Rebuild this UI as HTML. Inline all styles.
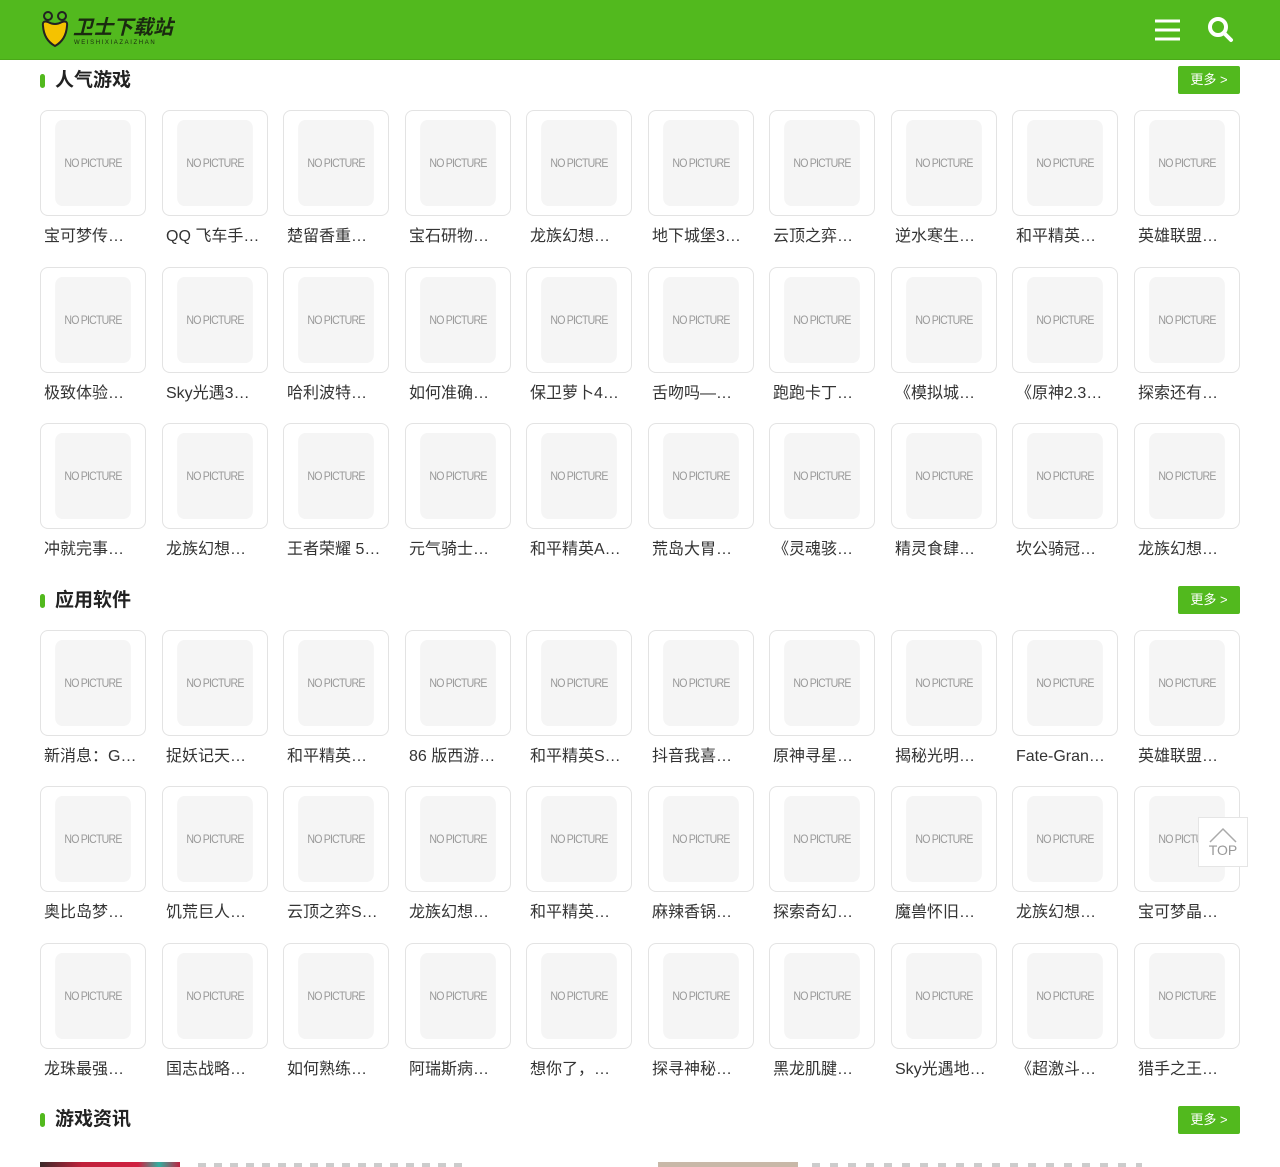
<!DOCTYPE html>
<html><head><meta charset="utf-8"><style>
*{margin:0;padding:0;box-sizing:border-box}
body{width:1280px;height:1167px;overflow:hidden;background:#fff;font-family:"Liberation Sans","Noto Sans CJK SC",sans-serif;position:relative}
.hd{position:absolute;left:0;top:0;width:1280px;height:60px;background:#52b91e;border-bottom:1px solid #4aa818}
.logo{position:absolute;left:40px;top:10px}
.ttl{position:absolute;left:40px;font-size:19px;font-weight:bold;color:#222;height:24px;line-height:24px;padding-left:15px}
.ttl:before{content:"";position:absolute;left:0;top:5px;width:5px;height:14px;border-radius:3px;background:#52b91e}
.more{position:absolute;left:1178px;width:62px;height:28px;background:#52b91e;color:#fff;font-size:13px;line-height:28px;text-align:center;border-radius:2px}
.row{position:absolute;left:40px;width:1210px;height:150px}
.c{position:absolute;top:0;width:106px}
.b{width:106px;height:106px;border:1px solid #e3e3e3;border-radius:8px;padding:9px}
.i{width:86px;height:86px;background:#f5f5f5;border-radius:8px;color:#999;font-size:12px;line-height:86px;text-align:center;letter-spacing:-0.9px;transform:scaleX(0.88)}
.t{font-size:16px;color:#333;margin-top:11px;padding-left:4px;white-space:nowrap;height:20px;line-height:20px}
.top{position:absolute;left:1198px;top:817px;width:50px;height:50px;background:#fff;border:1px solid #e5e5e5;text-align:center;color:#999;font-size:14px}
</style></head><body>
<div class="hd">
<div class="logo"><svg width="135" height="40" viewBox="0 0 135 40">
<circle cx="8" cy="6" r="4" fill="none" stroke="#222" stroke-width="2"/><circle cx="22" cy="6" r="4" fill="none" stroke="#222" stroke-width="2"/>
<path d="M3 16 Q2 10 8 12 Q15 16 22 12 Q28 10 27 16 Q26 30 15 36 Q4 30 3 16Z" fill="#f5c200" stroke="#222" stroke-width="2"/>
<text x="33" y="24" font-size="20" font-weight="bold" fill="#1a2a10" font-family="Noto Sans CJK SC,sans-serif" font-style="italic">卫士下载站</text>
<text x="34" y="34" font-size="6" fill="#1a2a10" letter-spacing="1.6">WEISHIXIAZAIZHAN</text>
</svg></div>
<svg style="position:absolute;left:1154px;top:18px" width="27" height="24"><path d="M1 3h25M1 12h25M1 21h25" stroke="#fff" stroke-width="3"/></svg>
<svg style="position:absolute;left:1207px;top:16px" width="27" height="27"><circle cx="11" cy="11" r="8" fill="none" stroke="#fff" stroke-width="4"/><path d="M17 17l7 7" stroke="#fff" stroke-width="4" stroke-linecap="round"/></svg>
</div>

<div class="ttl" style="top:69px">人气游戏</div><div class="more" style="top:66px">更多 &gt;</div>
<div class="row" style="top:110px">
<div class="c" style="left:0"><div class="b"><div class="i">NO PICTURE</div></div><div class="t">宝可梦传…</div></div>
<div class="c" style="left:122px"><div class="b"><div class="i">NO PICTURE</div></div><div class="t">QQ 飞车手…</div></div>
<div class="c" style="left:243px"><div class="b"><div class="i">NO PICTURE</div></div><div class="t">楚留香重…</div></div>
<div class="c" style="left:365px"><div class="b"><div class="i">NO PICTURE</div></div><div class="t">宝石研物…</div></div>
<div class="c" style="left:486px"><div class="b"><div class="i">NO PICTURE</div></div><div class="t">龙族幻想…</div></div>
<div class="c" style="left:608px"><div class="b"><div class="i">NO PICTURE</div></div><div class="t">地下城堡3…</div></div>
<div class="c" style="left:729px"><div class="b"><div class="i">NO PICTURE</div></div><div class="t">云顶之弈…</div></div>
<div class="c" style="left:851px"><div class="b"><div class="i">NO PICTURE</div></div><div class="t">逆水寒生…</div></div>
<div class="c" style="left:972px"><div class="b"><div class="i">NO PICTURE</div></div><div class="t">和平精英…</div></div>
<div class="c" style="left:1094px"><div class="b"><div class="i">NO PICTURE</div></div><div class="t">英雄联盟…</div></div>
</div>
<div class="row" style="top:267px">
<div class="c" style="left:0"><div class="b"><div class="i">NO PICTURE</div></div><div class="t">极致体验…</div></div>
<div class="c" style="left:122px"><div class="b"><div class="i">NO PICTURE</div></div><div class="t">Sky光遇3…</div></div>
<div class="c" style="left:243px"><div class="b"><div class="i">NO PICTURE</div></div><div class="t">哈利波特…</div></div>
<div class="c" style="left:365px"><div class="b"><div class="i">NO PICTURE</div></div><div class="t">如何准确…</div></div>
<div class="c" style="left:486px"><div class="b"><div class="i">NO PICTURE</div></div><div class="t">保卫萝卜4…</div></div>
<div class="c" style="left:608px"><div class="b"><div class="i">NO PICTURE</div></div><div class="t">舌吻吗—…</div></div>
<div class="c" style="left:729px"><div class="b"><div class="i">NO PICTURE</div></div><div class="t">跑跑卡丁…</div></div>
<div class="c" style="left:851px"><div class="b"><div class="i">NO PICTURE</div></div><div class="t">《模拟城…</div></div>
<div class="c" style="left:972px"><div class="b"><div class="i">NO PICTURE</div></div><div class="t">《原神2.3…</div></div>
<div class="c" style="left:1094px"><div class="b"><div class="i">NO PICTURE</div></div><div class="t">探索还有…</div></div>
</div>
<div class="row" style="top:423px">
<div class="c" style="left:0"><div class="b"><div class="i">NO PICTURE</div></div><div class="t">冲就完事…</div></div>
<div class="c" style="left:122px"><div class="b"><div class="i">NO PICTURE</div></div><div class="t">龙族幻想…</div></div>
<div class="c" style="left:243px"><div class="b"><div class="i">NO PICTURE</div></div><div class="t">王者荣耀 5…</div></div>
<div class="c" style="left:365px"><div class="b"><div class="i">NO PICTURE</div></div><div class="t">元气骑士…</div></div>
<div class="c" style="left:486px"><div class="b"><div class="i">NO PICTURE</div></div><div class="t">和平精英A…</div></div>
<div class="c" style="left:608px"><div class="b"><div class="i">NO PICTURE</div></div><div class="t">荒岛大胃…</div></div>
<div class="c" style="left:729px"><div class="b"><div class="i">NO PICTURE</div></div><div class="t">《灵魂骇…</div></div>
<div class="c" style="left:851px"><div class="b"><div class="i">NO PICTURE</div></div><div class="t">精灵食肆…</div></div>
<div class="c" style="left:972px"><div class="b"><div class="i">NO PICTURE</div></div><div class="t">坎公骑冠…</div></div>
<div class="c" style="left:1094px"><div class="b"><div class="i">NO PICTURE</div></div><div class="t">龙族幻想…</div></div>
</div>

<div class="ttl" style="top:589px">应用软件</div><div class="more" style="top:586px">更多 &gt;</div>
<div class="row" style="top:630px">
<div class="c" style="left:0"><div class="b"><div class="i">NO PICTURE</div></div><div class="t">新消息：G…</div></div>
<div class="c" style="left:122px"><div class="b"><div class="i">NO PICTURE</div></div><div class="t">捉妖记天…</div></div>
<div class="c" style="left:243px"><div class="b"><div class="i">NO PICTURE</div></div><div class="t">和平精英…</div></div>
<div class="c" style="left:365px"><div class="b"><div class="i">NO PICTURE</div></div><div class="t">86 版西游…</div></div>
<div class="c" style="left:486px"><div class="b"><div class="i">NO PICTURE</div></div><div class="t">和平精英S…</div></div>
<div class="c" style="left:608px"><div class="b"><div class="i">NO PICTURE</div></div><div class="t">抖音我喜…</div></div>
<div class="c" style="left:729px"><div class="b"><div class="i">NO PICTURE</div></div><div class="t">原神寻星…</div></div>
<div class="c" style="left:851px"><div class="b"><div class="i">NO PICTURE</div></div><div class="t">揭秘光明…</div></div>
<div class="c" style="left:972px"><div class="b"><div class="i">NO PICTURE</div></div><div class="t">Fate-Gran…</div></div>
<div class="c" style="left:1094px"><div class="b"><div class="i">NO PICTURE</div></div><div class="t">英雄联盟…</div></div>
</div>
<div class="row" style="top:786px">
<div class="c" style="left:0"><div class="b"><div class="i">NO PICTURE</div></div><div class="t">奥比岛梦…</div></div>
<div class="c" style="left:122px"><div class="b"><div class="i">NO PICTURE</div></div><div class="t">饥荒巨人…</div></div>
<div class="c" style="left:243px"><div class="b"><div class="i">NO PICTURE</div></div><div class="t">云顶之弈S…</div></div>
<div class="c" style="left:365px"><div class="b"><div class="i">NO PICTURE</div></div><div class="t">龙族幻想…</div></div>
<div class="c" style="left:486px"><div class="b"><div class="i">NO PICTURE</div></div><div class="t">和平精英…</div></div>
<div class="c" style="left:608px"><div class="b"><div class="i">NO PICTURE</div></div><div class="t">麻辣香锅…</div></div>
<div class="c" style="left:729px"><div class="b"><div class="i">NO PICTURE</div></div><div class="t">探索奇幻…</div></div>
<div class="c" style="left:851px"><div class="b"><div class="i">NO PICTURE</div></div><div class="t">魔兽怀旧…</div></div>
<div class="c" style="left:972px"><div class="b"><div class="i">NO PICTURE</div></div><div class="t">龙族幻想…</div></div>
<div class="c" style="left:1094px"><div class="b"><div class="i">NO PICTURE</div></div><div class="t">宝可梦晶…</div></div>
</div>
<div class="row" style="top:943px">
<div class="c" style="left:0"><div class="b"><div class="i">NO PICTURE</div></div><div class="t">龙珠最强…</div></div>
<div class="c" style="left:122px"><div class="b"><div class="i">NO PICTURE</div></div><div class="t">国志战略…</div></div>
<div class="c" style="left:243px"><div class="b"><div class="i">NO PICTURE</div></div><div class="t">如何熟练…</div></div>
<div class="c" style="left:365px"><div class="b"><div class="i">NO PICTURE</div></div><div class="t">阿瑞斯病…</div></div>
<div class="c" style="left:486px"><div class="b"><div class="i">NO PICTURE</div></div><div class="t">想你了，…</div></div>
<div class="c" style="left:608px"><div class="b"><div class="i">NO PICTURE</div></div><div class="t">探寻神秘…</div></div>
<div class="c" style="left:729px"><div class="b"><div class="i">NO PICTURE</div></div><div class="t">黑龙肌腱…</div></div>
<div class="c" style="left:851px"><div class="b"><div class="i">NO PICTURE</div></div><div class="t">Sky光遇地…</div></div>
<div class="c" style="left:972px"><div class="b"><div class="i">NO PICTURE</div></div><div class="t">《超激斗…</div></div>
<div class="c" style="left:1094px"><div class="b"><div class="i">NO PICTURE</div></div><div class="t">猎手之王…</div></div>
</div>

<div class="ttl" style="top:1108px">游戏资讯</div><div class="more" style="top:1106px">更多 &gt;</div>
<div style="position:absolute;left:40px;top:1162px;width:140px;height:5px;background:linear-gradient(90deg,#3a2a2a 0,#c0203a 30%,#d02040 70%,#30b0a0 85%,#c02040 100%)"></div>
<div style="position:absolute;left:198px;top:1163px;width:270px;height:4px;background:repeating-linear-gradient(90deg,#ccc 0 8px,transparent 8px 16px)"></div>
<div style="position:absolute;left:658px;top:1162px;width:140px;height:5px;background:#c8b8a8"></div>
<div style="position:absolute;left:812px;top:1163px;width:330px;height:4px;background:repeating-linear-gradient(90deg,#ccc 0 8px,transparent 8px 18px)"></div>

<div class="top"><svg width="30" height="18" style="display:block;margin:8px auto 0"><path d="M2 16L15 3L28 16" fill="none" stroke="#aaa" stroke-width="1.5"/></svg><div style="line-height:16px;margin-top:-2px">TOP</div></div>
</body></html>
